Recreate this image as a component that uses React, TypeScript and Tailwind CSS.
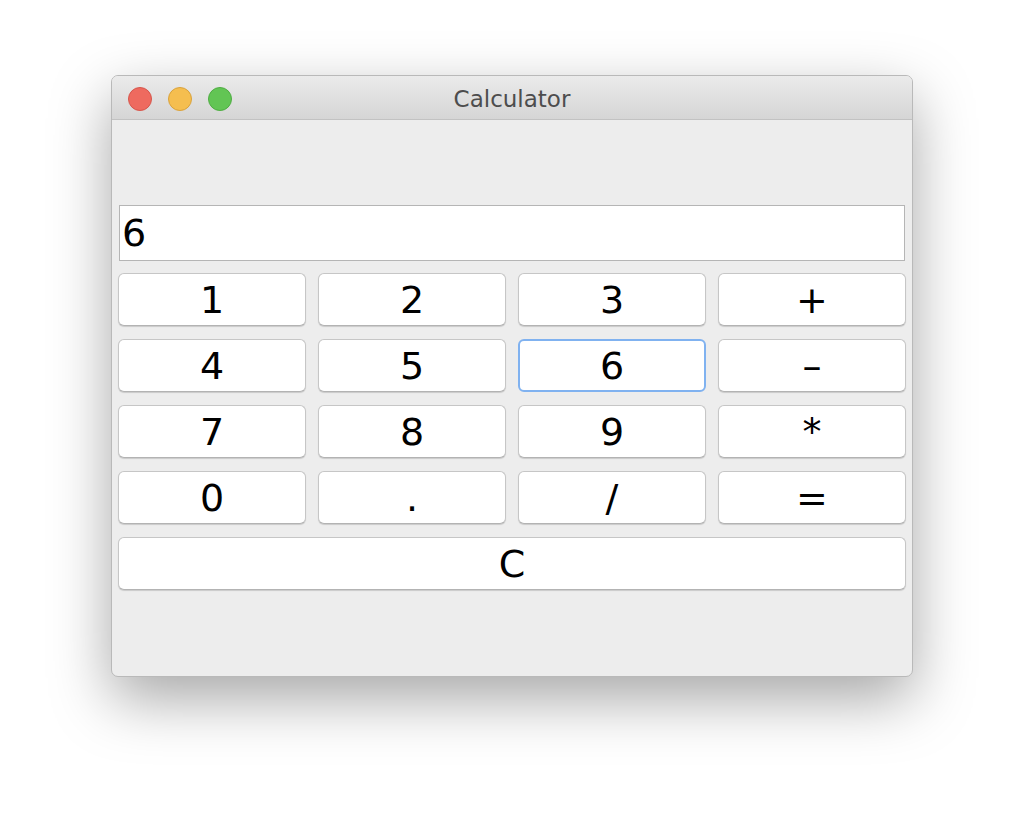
const keys = ['1', '2', '3', '+', '4', '5', '6', '–', '7', '8', '9', '*', '0', '.', '/', '=']

function TrafficLights() {
  return (
    <div className="flex items-center gap-[16px] pl-[16px] pt-[2px]">
      <span className="w-[24px] h-[24px] rounded-full bg-[#ee6a5f] border border-[#d6564c]" />
      <span className="w-[24px] h-[24px] rounded-full bg-[#f5be4f] border border-[#d9a23c]" />
      <span className="w-[24px] h-[24px] rounded-full bg-[#62c554] border border-[#4fad43]" />
    </div>
  )
}

const keyCls =
  'h-[53px] rounded-[6px] bg-white border border-[#c6c6c6] border-b-[#b3b3b3] shadow-[0_1px_1px_rgba(0,0,0,0.15)] flex items-center justify-center text-[38px] text-black leading-none'
const focusCls =
  'h-[53px] rounded-[6px] bg-white border-2 border-[#80b2f0] flex items-center justify-center text-[38px] text-black leading-none'

export default function App() {
  const font = { fontFamily: '"DejaVu Sans", "Liberation Sans", sans-serif' }
  return (
    <div className="w-[1024px] h-[824px] bg-white pt-[75px] pl-[111px]" style={font}>
      <div className="w-[802px] h-[602px] rounded-[7px] bg-[#ededed] border border-[#b9b9b9] shadow-[0_22px_60px_rgba(0,0,0,0.35)] flex flex-col overflow-hidden">
        <div className="relative h-[44px] bg-gradient-to-b from-[#ebebeb] to-[#d5d5d5] border-b border-[#c2c2c2] flex items-center shrink-0">
          <TrafficLights />
          <div className="absolute inset-0 flex items-center justify-center pt-[4px] text-[23px] text-[#4d4d4d]">
            Calculator
          </div>
        </div>
        <div className="flex-1 pt-[85px] pl-[6px] pr-[5px]">
          <div className="ml-[1px] w-[786px] h-[56px] bg-white border border-[#b5b5b5] flex items-center pl-[2px] text-[38px] text-black">
            6
          </div>
          <div className="grid grid-cols-4 gap-x-[12px] gap-y-[13px] mt-[12px] w-[788px]">
            {keys.map((k) => (
              <button key={k} type="button" className={k === '6' ? focusCls : keyCls}>
                {k}
              </button>
            ))}
            <button type="button" className={`col-span-4 ${keyCls}`}>
              C
            </button>
          </div>
        </div>
      </div>
    </div>
  )
}
